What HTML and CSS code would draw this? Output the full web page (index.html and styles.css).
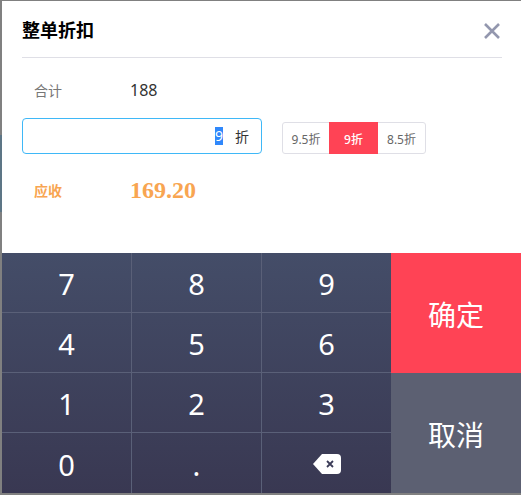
FILE: index.html
```html
<!DOCTYPE html>
<html lang="zh-CN">
<head>
    <meta charset="utf-8">
    <title>整单折扣</title>
    <link rel="stylesheet" href="styles.css">
</head>

<body>

    <div class="dialog">
        <div class="content">
            <div class="header">
                <h1>整单折扣</h1>
                <svg class="close" width="16" height="16" viewBox="0 0 16 16">
                    <path d="M1 1L15 15M15 1L1 15" stroke="#9397ae" stroke-width="2.6" fill="none"/>
                </svg>
            </div>

            <div class="row total">
                <span class="label">合计</span>
                <span class="value">188</span>
            </div>

            <div class="discount">
                <div class="discount-input">
                    <span class="selected">9</span>
                    <span class="unit">折</span>
                </div>
                <div class="options">
                    <span class="option">9.5折</span>
                    <span class="option active">9折</span>
                    <span class="option">8.5折</span>
                </div>
            </div>

            <div class="row due">
                <span class="label">应收</span>
                <span class="value">169.20</span>
            </div>
        </div>

        <div class="keyboard">
            <div class="keys">
                <div class="key">7</div>
                <div class="key">8</div>
                <div class="key">9</div>
                <div class="key">4</div>
                <div class="key">5</div>
                <div class="key">6</div>
                <div class="key">1</div>
                <div class="key">2</div>
                <div class="key">3</div>
                <div class="key">0</div>
                <div class="key">.</div>
                <div class="key">
                    <svg width="28" height="20" viewBox="0 0 28 20">
                        <path d="M9 0H24Q28 0 28 4V16Q28 20 24 20H9L0 10Z" fill="#fff"/>
                        <path d="M14 7L20 13M20 7L14 13" stroke="#3b3c58" stroke-width="1.8" fill="none"/>
                    </svg>
                </div>
            </div>
            <div class="actions">
                <div class="action confirm">确定</div>
                <div class="action cancel">取消</div>
            </div>
        </div>
    </div>

</body>
</html>
```

FILE: styles.css
```css
html, body {
    height: 100%;
}

body {
    margin: 0;
    padding: 1px 0 2px 2px;
    box-sizing: border-box;
    background: linear-gradient(#808080 135px, #5d7686 135px, #5d7686 212px, #808080 212px);
    font-family: 'Noto Sans', 'Noto Sans CJK SC', sans-serif;
    overflow: hidden;
}

.dialog {
    height: 100%;
    display: flex;
    flex-direction: column;
    background-color: #fff;
}

.content {
    flex: 1;
    padding: 0 19px 0 20px;
}

.header {
    padding: 2px 2px 0 0;
    box-sizing: border-box;
    height: 57px;
    display: flex;
    align-items: center;
    justify-content: space-between;
    border-bottom: 1px solid #dfdfe6;
}

.header h1 {
    margin: 0 0 2px;
    font-size: 18px;
    font-weight: 700;
    color: #000;
}

.close {
    margin-top: 1px;
}

.row {
    display: flex;
    align-items: center;
    padding-left: 12px;
}

.row .label {
    width: 96px;
    font-size: 14px;
}

.total {
    height: 60px;
    padding-top: 3px;
    box-sizing: border-box;
}

.total .label {
    color: #777;
}

.total .value {
    font-size: 16px;
    color: #333;
}

.discount {
    display: flex;
    align-items: center;
    gap: 20px;
}

.discount-input {
    width: 226px;
    height: 34px;
    display: flex;
    align-items: center;
    justify-content: flex-end;
    gap: 12px;
    padding-right: 12px;
    border: 1px solid #3fb8f7;
    border-radius: 4px;
    font-size: 14px;
    color: #333;
}

.selected {
    background-color: #3088fb;
    color: #fff;
    line-height: 18px;
    width: 8px;
    text-align: center;
}

.options {
    display: flex;
    height: 30px;
    border: 1px solid #dfdfe6;
    border-radius: 3px;
    margin-top: 4px;
}

.option {
    width: 47px;
    padding-top: 1px;
    box-sizing: border-box;
    display: flex;
    align-items: center;
    justify-content: center;
    font-size: 12px;
    color: #666;
}

.option:first-child {
    width: 46px;
}

.option.active {
    width: 49px;
    margin: -1px 0;
    background-color: #ff4355;
    color: #fff;
    font-weight: 500;
}

.due {
    height: 72px;
}

.due .label {
    font-weight: 700;
    color: #f8a551;
}

.due .value {
    font-family: 'Liberation Serif', serif;
    font-size: 24px;
    font-weight: 700;
    color: #f8a551;
}

.keyboard {
    height: 240px;
    display: flex;
}

.keys {
    flex: 1;
    display: grid;
    grid-template-columns: 130px 130px 129px;
    grid-template-rows: repeat(4, 60px);
    background: linear-gradient(#444d68, #393852);
}

.key {
    display: flex;
    align-items: center;
    justify-content: center;
    box-sizing: border-box;
    padding-top: 2px;
    border-right: 1px solid #5a6078;
    border-bottom: 1px solid #5a6078;
    font-size: 29px;
    color: #fff;
}

.key:nth-child(3n) {
    border-right: none;
}

.key:nth-child(n+10) {
    border-bottom: none;
}

.actions {
    width: 130px;
    display: flex;
    flex-direction: column;
}

.action {
    height: 120px;
    padding-top: 2px;
    box-sizing: border-box;
    display: flex;
    align-items: center;
    justify-content: center;
    font-size: 28px;
    color: #fff;
}

.confirm {
    background-color: #ff4355;
}

.cancel {
    background-color: #5c6072;
}
```
